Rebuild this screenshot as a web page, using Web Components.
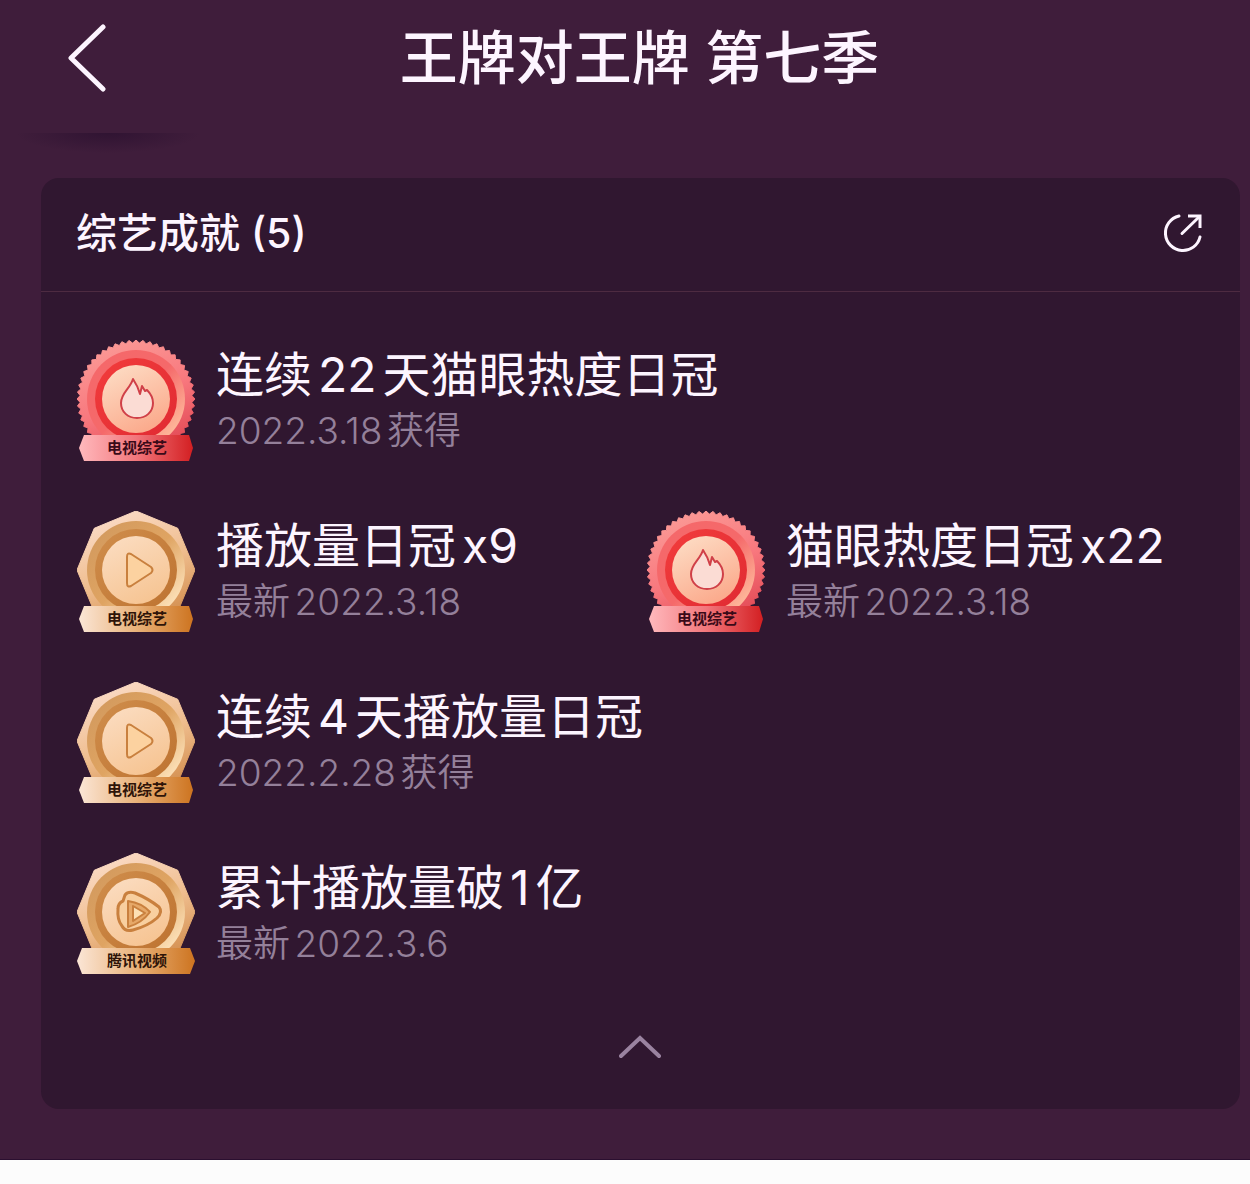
<!DOCTYPE html>
<html lang="zh-CN">
<head>
  <meta charset="utf-8">
  <meta name="viewport" content="width=device-width, initial-scale=1">
  <title>王牌对王牌 第七季</title>
  <style>
    body {
      margin: 0;
      background: #fcfcfc;
      font-family: Inter, "Noto Sans CJK SC", sans-serif;
    }
  </style>
</head>
<body>
  <show-page>
    <show-header slot="header">王牌对王牌 第七季</show-header>
    <achievement-card heading="综艺成就 (5)">
      <achievement-item class="wide" badge="heat" ribbon="电视综艺">
        连续22天猫眼热度日冠
        <span slot="date">2022.3.18获得</span>
      </achievement-item>
      <achievement-item badge="play" ribbon="电视综艺">
        播放量日冠x9
        <span slot="date">最新2022.3.18</span>
      </achievement-item>
      <achievement-item badge="heat" ribbon="电视综艺">
        猫眼热度日冠x22
        <span slot="date">最新2022.3.18</span>
      </achievement-item>
      <achievement-item class="wide" badge="play" ribbon="电视综艺">
        连续4天播放量日冠
        <span slot="date">2022.2.28获得</span>
      </achievement-item>
      <achievement-item class="wide" badge="tencent" ribbon="腾讯视频">
        累计播放量破1亿
        <span slot="date">最新2022.3.6</span>
      </achievement-item>
    </achievement-card>
  </show-page>

  <script>
    class ShowPage extends HTMLElement {
      constructor() {
        super();
        this.attachShadow({ mode: "open" });
      }

      connectedCallback() {
        this.shadowRoot.innerHTML = `
          <style>
            :host {
              display: block;
              color: #fdf5ff;
              background: #3f1d3b;
              border-bottom: 1px solid #2b0f30;
            }
            main {
              padding: 45px 10px 50px 41px;
            }
          </style>
          <slot name="header"></slot>
          <main><slot></slot></main>
        `;
      }
    }

    class ShowHeader extends HTMLElement {
      constructor() {
        super();
        this.attachShadow({ mode: "open" });
      }

      connectedCallback() {
        this.shadowRoot.innerHTML = `
          <style>
            :host {
              display: block;
              position: relative;
            }
            header {
              display: grid;
              grid-template-columns: 1fr auto 1fr;
              align-items: center;
              padding: 16px 12px 33px 41px;
            }
            button {
              justify-self: start;
              display: flex;
              padding: 8px 24px;
              border: none;
              background: none;
              color: inherit;
              cursor: pointer;
            }
            h1 {
              margin: 0;
              font-size: 58px;
              line-height: 84px;
              font-weight: 500;
            }
            /* soft shade that hangs under the bar, below the back button */
            .shade {
              position: absolute;
              top: 100%;
              left: 16px;
              width: 184px;
              height: 20px;
              background: radial-gradient(ellipse 50% 100% at 50% 0, #2c1130cc, #2c113066 50%, #2c113000);
            }
          </style>
          <header>
            <button aria-label="返回">
              <svg width="42" height="68" viewBox="0 0 42 68" fill="none" stroke="currentColor"
                   stroke-width="5" stroke-linecap="round" stroke-linejoin="round">
                <path d="M38 3 6 34 38 65"/>
              </svg>
            </button>
            <h1><slot></slot></h1>
          </header>
          <div class="shade"></div>
        `;
      }
    }

    class AchievementCard extends HTMLElement {
      constructor() {
        super();
        this.attachShadow({ mode: "open" });
      }

      connectedCallback() {
        this.render();
        this.bindEvents();
      }

      bindEvents() {
        const list = this.shadowRoot.querySelector(".list");
        const toggle = this.shadowRoot.getElementById("toggle");
        toggle.addEventListener("click", () => {
          list.hidden = !list.hidden;
          toggle.setAttribute("aria-expanded", String(!list.hidden));
        });
      }

      render() {
        this.shadowRoot.innerHTML = `
          <style>
            :host {
              display: block;
              border-radius: 18px;
              background: #301730;
            }
            .head {
              display: flex;
              align-items: center;
              justify-content: space-between;
              padding: 24px 36px 27px 35px;
              border-bottom: 1px solid #4d2b41;
            }
            h2 {
              margin: 0;
              font-size: 41px;
              line-height: 62px;
              font-weight: 500;
            }
            button {
              display: flex;
              padding: 0;
              border: none;
              background: none;
              color: inherit;
              cursor: pointer;
            }
            .list {
              display: grid;
              grid-template-columns: 1fr 1fr;
              row-gap: 49px;
              padding: 48px 23px 48px 36px;
            }
            .list[hidden] {
              display: none;
            }
            ::slotted(.wide) {
              grid-column: 1 / -1;
            }
            #toggle {
              margin: 0 auto;
              padding: 11px 24px 49px;
              color: #9a83a0;
            }
            #toggle[aria-expanded="false"] svg {
              transform: rotate(180deg);
            }
          </style>
          <div class="head">
            <h2>${this.getAttribute("heading")}</h2>
            <button aria-label="分享">
              <svg width="42" height="42" viewBox="0 0 42 42" fill="none" stroke="currentColor" stroke-width="3">
                <path d="M17 4A17.5 17.5 0 1 0 38 25" stroke-linecap="round"/>
                <path d="M20 21.5 37 5" stroke-linecap="round"/>
                <path d="M26 4H38V16"/>
              </svg>
            </button>
          </div>
          <div class="list"><slot></slot></div>
          <button id="toggle" aria-label="收起" aria-expanded="true">
            <svg width="44" height="26" viewBox="0 0 44 26" fill="none" stroke="currentColor"
                 stroke-width="4" stroke-linecap="round">
              <path d="M2 22 21 4 40 22"/>
            </svg>
          </button>
        `;
      }
    }

    class AchievementItem extends HTMLElement {
      constructor() {
        super();
        this.attachShadow({ mode: "open" });
      }

      connectedCallback() {
        this.shadowRoot.innerHTML = `
          <style>
            :host {
              display: flex;
              align-items: center;
              gap: 21px;
              white-space: nowrap;
              text-autospace: normal;
            }
            .title {
              font-size: 48px;
              line-height: 60px;
            }
            .date {
              font-size: 37px;
              line-height: 52px;
              font-weight: 350;
              color: #94809a;
            }
          </style>
          <medal-badge kind="${this.getAttribute("badge")}" label="${this.getAttribute("ribbon")}"></medal-badge>
          <div>
            <div class="title"><slot></slot></div>
            <div class="date"><slot name="date"></slot></div>
          </div>
        `;
      }
    }

    const GOLD = {
      rim: ["#fbdcc8", "#efbd8e", "#cf8846"],
      band: ["#d39a5e", "#dfa462", "#ffe6c0"],
      ring: ["#d08e4c", "#bd7230"],
      disc: ["#fbdcc0", "#f6c492"],
      ribbon: ["#fbe6d6", "#e9b27a", "#cd7420"],
      line: "#c9803e",
      text: "#2e1408"
    };

    const RED = {
      rim: ["#fb9a96", "#f8787e", "#e04450"],
      band: ["#f5686a", "#f5696a", "#ffc09f"],
      ring: ["#f23c3c", "#e02a32"],
      disc: ["#fddcc4", "#fba88a"],
      ribbon: ["#ffb9bd", "#f2777c", "#d31f22"],
      line: "#d04048",
      text: "#3a0a18"
    };

    const SYMBOLS = {
      heat: `<path fill="#fbdcd4" d="M56 39C60 45 62 50 63 54L65 46L68 51L70 50C74 54 76 59 76 63C76 72 69 78 60 78C51 78 44 72 44 63C44 53 53 49 56 39Z"/>`,
      play: `<path fill="#fcd2a0" d="M50 46Q50 41 54 43L74 56Q77 59 74 62L54 75Q50 77 50 72Z"/>`,
      tencent: `
        <path fill="#f8cf9f" stroke-width="3" d="M48 42Q51 38 58 40Q72 46 82 54Q86 59 80 65Q71 73 56 77Q48 79 45 73Q40 67 41 56Q41 50 46 48Z"/>
        <path fill="#e6a868" d="M51 48Q65 50 73 59Q65 70 51 74Z"/>
        <path fill="#fde0b4" d="M56 53 68 60 56 68Z"/>`
    };

    function polygonPoints(count, outer, inner) {
      const points = [];
      for (let i = 0; i < count; i++) {
        const radius = i % 2 ? inner : outer;
        const angle = (i / count) * Math.PI * 2 - Math.PI / 2;
        points.push(
          `${(59 + radius * Math.cos(angle)).toFixed(2)},${(59 + radius * Math.sin(angle)).toFixed(2)}`
        );
      }
      return points.join(" ");
    }

    function gradient(id, colors, direction) {
      const stops = colors
        .map((color, i) => `<stop offset="${i / (colors.length - 1)}" stop-color="${color}"/>`)
        .join("");
      return `<linearGradient id="${id}" ${direction}>${stops}</linearGradient>`;
    }

    class MedalBadge extends HTMLElement {
      constructor() {
        super();
        this.attachShadow({ mode: "open" });
      }

      connectedCallback() {
        const kind = this.getAttribute("kind");
        const colors = kind === "heat" ? RED : GOLD;
        // the heat medal has a toothed edge, the others are octagons
        const edge = kind === "heat" ? polygonPoints(104, 59, 56) : polygonPoints(8, 59, 59);
        const ribbon = kind === "tencent"
          ? "M5 95H113L118 108 113 121H5L0 108Z"
          : "M7 95H112L116 108 112 121H7L2 108Z";

        this.shadowRoot.innerHTML = `
          <style>
            :host {
              display: block;
              flex: none;
            }
            svg {
              display: block;
            }
            text {
              font: 700 15px "Noto Sans CJK SC", sans-serif;
            }
          </style>
          <svg width="118" height="122" viewBox="0 0 118 122">
            <defs>
              ${gradient("rim", colors.rim, 'x1=".3" y1="0" x2=".7" y2="1"')}
              ${gradient("band", colors.band, 'x1=".1" y1=".1" x2=".9" y2=".9"')}
              ${gradient("ring", colors.ring, 'x1="0" y1="0" x2="1" y2="1"')}
              ${gradient("disc", colors.disc, 'x1=".2" y1="0" x2=".7" y2="1"')}
              ${gradient("ribbon", colors.ribbon, 'x1="0" y1="0" x2="1" y2="0"')}
            </defs>
            <polygon points="${edge}" fill="url(#rim)" stroke="url(#rim)" stroke-linejoin="round"/>
            <circle cx="59" cy="59" r="49" fill="url(#band)"/>
            <circle cx="59" cy="59" r="41" fill="url(#ring)"/>
            <circle cx="59" cy="59" r="34" fill="url(#disc)"/>
            <g stroke="${colors.line}" stroke-width="2" stroke-linejoin="round">${SYMBOLS[kind]}</g>
            <path d="${ribbon}" fill="url(#ribbon)"/>
            <text x="60" y="113" text-anchor="middle" fill="${colors.text}">${this.getAttribute("label")}</text>
          </svg>
        `;
      }
    }

    customElements.define("medal-badge", MedalBadge);
    customElements.define("achievement-item", AchievementItem);
    customElements.define("achievement-card", AchievementCard);
    customElements.define("show-header", ShowHeader);
    customElements.define("show-page", ShowPage);
  </script>
</body>
</html>
